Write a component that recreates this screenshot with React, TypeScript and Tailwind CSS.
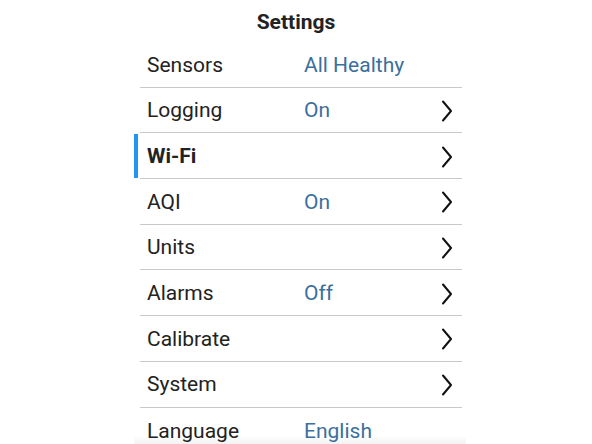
import React from "react";

type Row = { label: string; value?: string; chevron?: boolean; active?: boolean };

const rows: Row[] = [
  { label: "Sensors", value: "All Healthy" },
  { label: "Logging", value: "On", chevron: true },
  { label: "Wi-Fi", chevron: true, active: true },
  { label: "AQI", value: "On", chevron: true },
  { label: "Units", chevron: true },
  { label: "Alarms", value: "Off", chevron: true },
  { label: "Calibrate", chevron: true },
  { label: "System", chevron: true },
  { label: "Language", value: "English" },
];

function Chevron() {
  return (
    <svg width="12" height="22" viewBox="0 0 12 22" className="text-[#111]">
      <path d="M2 1.5 L10 11 L2 20.5" fill="none" stroke="currentColor" strokeWidth="2" strokeLinecap="round" strokeLinejoin="round" />
    </svg>
  );
}

export default function App() {
  return (
    <div className="w-[592px] h-[444px] bg-white overflow-hidden flex flex-col" style={{ fontFamily: "Roboto, 'Noto Sans', sans-serif" }}>
      <div className="h-[42px] shrink-0 w-full flex items-center justify-center pt-[4px] text-[21px] font-bold text-[#222]">
        Settings
      </div>
      <div className="ml-[134px] w-[332px] shrink-0 flex flex-col relative">
        <div className="absolute left-0 right-0 top-[394px] h-[12px] bg-gradient-to-b from-white to-[#ebebeb]" />
        {rows.map((r, i) => (
          <div key={i} className="h-[45.7px] flex flex-col shrink-0 relative">
            <div className="flex-1 flex items-center relative pt-[2px]">
              {r.active && <div className="absolute left-0 top-[1px] bottom-0 w-[4px] bg-[#2196f3]" />}
              <div className={`pl-[13px] w-[170px] text-[21px] text-[#222] ${r.active ? "font-bold" : ""}`}>{r.label}</div>
              <div className="flex-1 text-[21px] text-[#3b6f9c]">{r.value}</div>
              <div className="w-[25px] flex items-center justify-start">{r.chevron && <Chevron />}</div>
            </div>
            {i < rows.length - 1 && <div className="h-px shrink-0 ml-[6px] w-[322px] bg-[#c9c9c9]" />}
          </div>
        ))}
      </div>
    </div>
  );
}
